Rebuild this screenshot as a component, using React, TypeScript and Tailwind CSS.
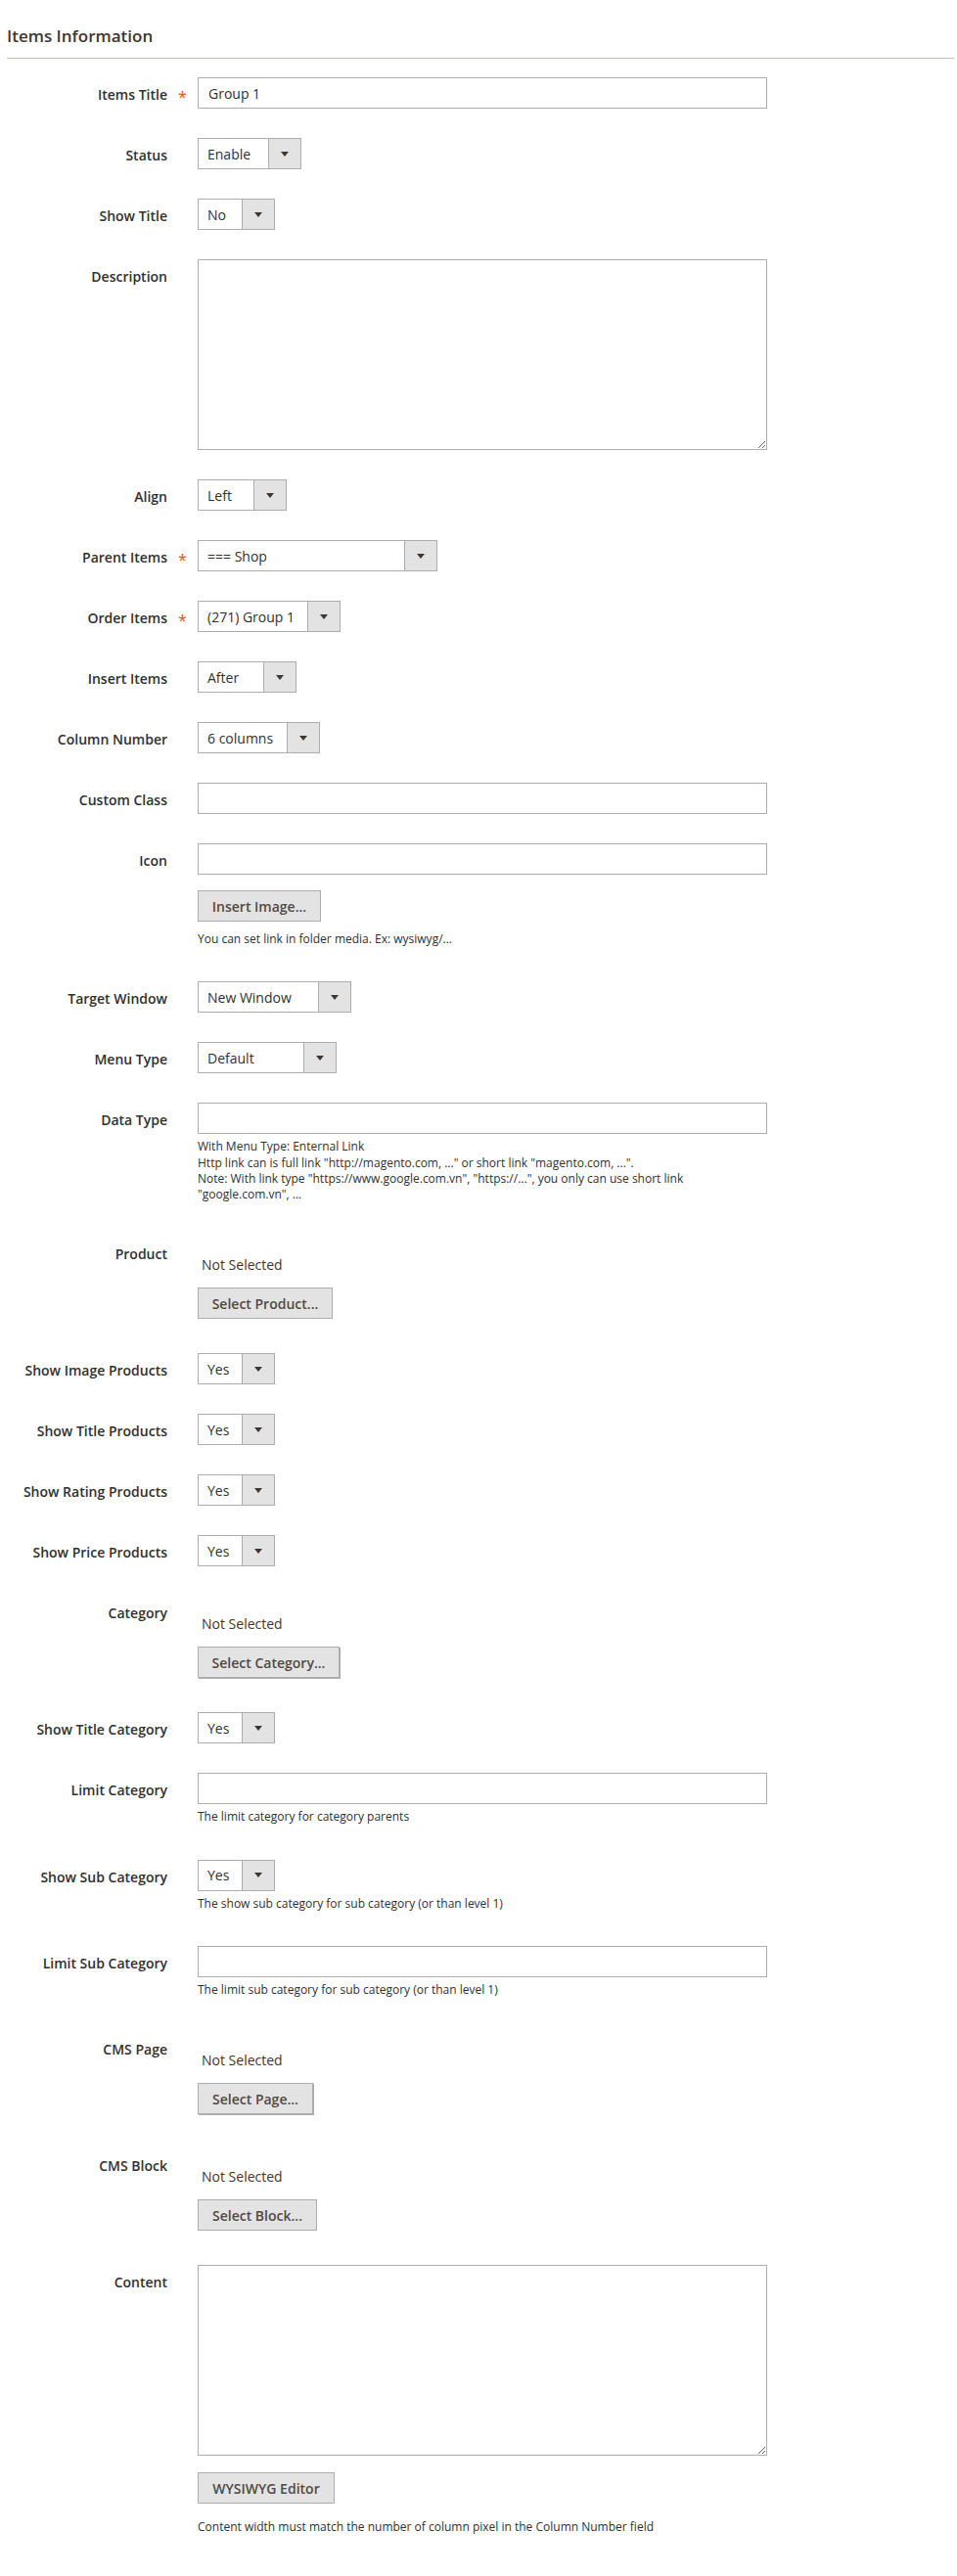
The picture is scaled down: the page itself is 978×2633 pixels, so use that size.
import React from "react";

function Arrow() {
  return (
    <svg width="8" height="5" viewBox="0 0 8 5" className="block">
      <path d="M0 0 H8 L4 5 Z" fill="#41362f" />
    </svg>
  );
}

function Label({ text, required }: { text: string; required?: boolean }) {
  return (
    <>
      <div className="w-[171px] shrink-0 pt-[8px] text-right text-[14px] font-semibold leading-[19px] text-[#303030]">
        {text}
      </div>
      <div className="w-[31px] shrink-0 pl-[11px] pt-[11px] text-[16px] leading-[19px] text-[#eb5202]">
        {required ? "*" : ""}
      </div>
    </>
  );
}

function Row({
  label,
  required,
  mb = "mb-[30px]",
  children,
}: {
  label: string;
  required?: boolean;
  mb?: string;
  children: React.ReactNode;
}) {
  return (
    <div className={`flex ${mb}`}>
      <Label text={label} required={required} />
      <div className="w-[582px] shrink-0">{children}</div>
    </div>
  );
}

function TextInput({ value = "" }: { value?: string }) {
  return (
    <input
      readOnly
      value={value}
      className="block h-[32px] w-full border border-[#adadad] bg-white px-[10px] text-[14px] text-[#303030] outline-none"
    />
  );
}

function Select({ value, w }: { value: string; w: string }) {
  return (
    <div className={`flex h-[32px] border border-[#adadad] bg-white ${w}`}>
      <div className="flex flex-1 items-center whitespace-nowrap pl-[9px] text-[14px] text-[#303030]">
        {value}
      </div>
      <div className="flex w-[33px] items-center justify-center border-l border-[#adadad] bg-[#e3e3e3]">
        <Arrow />
      </div>
    </div>
  );
}

function Btn({ text, w, shadow }: { text: string; w: string; shadow?: boolean }) {
  return (
    <button
      type="button"
      className={`block h-[32px] border border-[#adadad] bg-[#e3e3e3] text-center text-[14px] font-semibold text-[#514943] ${w} ${
        shadow ? "shadow-[1px_1px_0_#adadad]" : ""
      }`}
    >
      {text}
    </button>
  );
}

function Note({ children, mt = "mt-[5px]" }: { children: React.ReactNode; mt?: string }) {
  return (
    <div className={`${mt} whitespace-nowrap text-[12px] leading-[16.3px] text-[#303030]`}>{children}</div>
  );
}

function Chooser({ btn, w, shadow }: { btn: string; w: string; shadow?: boolean }) {
  return (
    <div className="pt-[19px]">
      <div className="pl-[4px] text-[14px] leading-[19px] text-[#41362f]">Not Selected</div>
      <div className="mt-[14px]">
        <Btn text={btn} w={w} shadow={shadow} />
      </div>
    </div>
  );
}

export default function App() {
  return (
    <div className="w-full bg-white pb-[40px] font-['Open_Sans','Noto_Sans',sans-serif] text-[#303030]">
      <div className="ml-[7px] mr-[3px] border-b border-[#cac3b4] pb-[10px] pt-[25px]">
        <div className="text-[17px] font-semibold leading-[24px] text-[#41362f]">Items Information</div>
      </div>

      <div className="pt-[19px]">
        <Row label="Items Title" required>
          <TextInput value="Group 1" />
        </Row>
        <Row label="Status">
          <Select value="Enable" w="w-[106px]" />
        </Row>
        <Row label="Show Title">
          <Select value="No" w="w-[79px]" />
        </Row>
        <Row label="Description">
          <textarea
            readOnly
            className="block h-[195px] w-full border border-[#adadad] bg-white px-[10px] py-[6px] text-[14px] outline-none"
          />
        </Row>
        <Row label="Align">
          <Select value="Left" w="w-[91px]" />
        </Row>
        <Row label="Parent Items" required>
          <Select value="=== Shop" w="w-[245px]" />
        </Row>
        <Row label="Order Items" required>
          <Select value="(271) Group 1" w="w-[146px]" />
        </Row>
        <Row label="Insert Items">
          <Select value="After" w="w-[101px]" />
        </Row>
        <Row label="Column Number">
          <Select value="6 columns" w="w-[125px]" />
        </Row>
        <Row label="Custom Class">
          <TextInput />
        </Row>
        <Row label="Icon" mb="mb-[35px]">
          <TextInput />
          <div className="mt-[16px]">
            <Btn text="Insert Image..." w="w-[126px]" />
          </div>
          <Note mt="mt-[10px]">You can set link in folder media. Ex: wysiwyg/...</Note>
        </Row>
        <Row label="Target Window">
          <Select value="New Window" w="w-[157px]" />
        </Row>
        <Row label="Menu Type">
          <Select value="Default" w="w-[142px]" />
        </Row>
        <Row label="Data Type" mb="mb-[35px]">
          <TextInput />
          <Note>
            <div>With Menu Type: Enternal Link</div>
            <div>Http link can is full link "http://magento.com, ..." or short link "magento.com, ...".</div>
            <div>Note: With link type "https://www.google.com.vn", "https://...", you only can use short link</div>
            <div>"google.com.vn", ...</div>
          </Note>
        </Row>
        <Row label="Product" mb="mb-[35px]">
          <Chooser btn="Select Product..." w="w-[138px]" />
        </Row>
        <Row label="Show Image Products">
          <Select value="Yes" w="w-[79px]" />
        </Row>
        <Row label="Show Title Products">
          <Select value="Yes" w="w-[79px]" />
        </Row>
        <Row label="Show Rating Products">
          <Select value="Yes" w="w-[79px]" />
        </Row>
        <Row label="Show Price Products">
          <Select value="Yes" w="w-[79px]" />
        </Row>
        <Row label="Category" mb="mb-[35px]">
          <Chooser btn="Select Category..." w="w-[145px]" shadow />
        </Row>
        <Row label="Show Title Category">
          <Select value="Yes" w="w-[79px]" />
        </Row>
        <Row label="Limit Category" mb="mb-[35px]">
          <TextInput />
          <Note>The limit category for category parents</Note>
        </Row>
        <Row label="Show Sub Category" mb="mb-[35px]">
          <Select value="Yes" w="w-[79px]" />
          <Note>The show sub category for sub category (or than level 1)</Note>
        </Row>
        <Row label="Limit Sub Category" mb="mb-[35px]">
          <TextInput />
          <Note>The limit sub category for sub category (or than level 1)</Note>
        </Row>
        <Row label="CMS Page" mb="mb-[35px]">
          <Chooser btn="Select Page..." w="w-[118px]" shadow />
        </Row>
        <Row label="CMS Block" mb="mb-[35px]">
          <Chooser btn="Select Block..." w="w-[122px]" />
        </Row>
        <Row label="Content" mb="mb-0">
          <textarea
            readOnly
            className="block h-[195px] w-full border border-[#adadad] bg-white px-[10px] py-[6px] text-[14px] outline-none"
          />
          <div className="mt-[17px]">
            <Btn text="WYSIWYG Editor" w="w-[140px]" />
          </div>
          <Note mt="mt-[16px]">Content width must match the number of column pixel in the Column Number field</Note>
        </Row>
      </div>
    </div>
  );
}
